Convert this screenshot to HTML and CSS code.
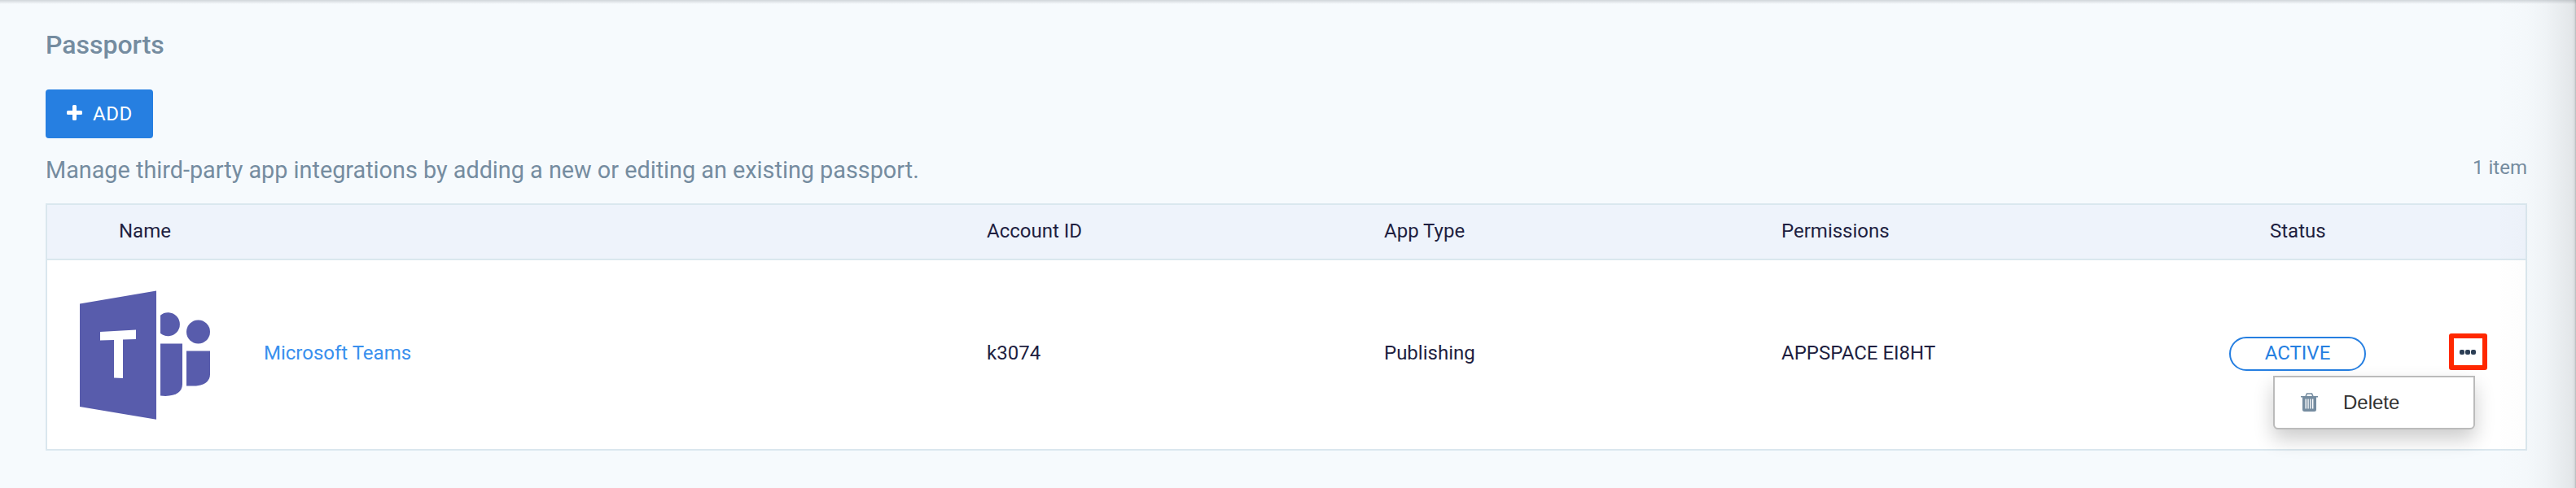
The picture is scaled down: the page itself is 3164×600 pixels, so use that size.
FILE: index.html
```html
<!DOCTYPE html>
<html lang="en">
<head>
    <meta charset="UTF-8">
    <meta name="viewport" content="width=device-width, initial-scale=1.0">
    <title>Passports</title>
    <link rel="stylesheet" href="styles.css">
</head>
<body>
    <div class="container">
        <h1>Passports</h1>
        <button type="button" class="add-button">
            <svg class="plus-icon" viewBox="0 0 19 19">
                <path d="M7 1.5Q7 0 8.5 0h2Q12 0 12 1.5V7h5.5Q19 7 19 8.5v2Q19 12 17.500 12H12v5.500Q12 19 10.500 19h-2Q7 19 7 17.500V12H1.500Q0 12 0 10.500v-2Q0 7 1.500 7H7z"/>
            </svg>
            <span>ADD</span>
        </button>
        <div class="summary">
            <p class="description">Manage third-party app integrations by adding a new or editing an existing passport.</p>
            <span class="count">1 item</span>
        </div>

        <div class="table">
            <div class="row header">
                <div class="name">Name</div>
                <div>Account ID</div>
                <div>App Type</div>
                <div>Permissions</div>
                <div class="status">Status</div>
            </div>
            <div class="row item">
                <div class="app">
                    <svg class="logo" viewBox="0 0 160 160">
                        <path fill-rule="evenodd" d="M0 17.500L94 1.500v158.300L0 144zM25 52v10.500l17-.5v46.500l11 .5V61.500l16-.5V49.500z"/>
                        <path d="M99 31.700A14.500 14.500 0 1 1 99 53.800z"/>
                        <path d="M99 66.500h27v50c0 10-10 16-27 14z"/>
                        <circle cx="145.500" cy="52" r="14.500"/>
                        <path d="M131 75.500h29v29c0 9-9 14-20 14h-9z"/>
                    </svg>
                    <a class="link">Microsoft Teams</a>
                </div>
                <div>k3074</div>
                <div>Publishing</div>
                <div>APPSPACE EI8HT</div>
                <div><span class="pill">ACTIVE</span></div>
                <div class="actions">
                    <button type="button" class="more">
                        <svg class="dots" viewBox="0 0 20 6">
                            <rect width="6" height="6" rx="2"/>
                            <rect x="7" width="6" height="6" rx="2"/>
                            <rect x="14" width="6" height="6" rx="2"/>
                        </svg>
                    </button>
                    <div class="menu">
                        <svg class="trash-icon" viewBox="0 0 21 23">
                            <path class="handle" d="M6 4.500L7.500 1h6L15 4.500"/>
                            <path fill-rule="evenodd" d="M0 4h21v1.500h-2V20.500Q19 23 16.500 23h-12Q2 23 2 20.500V5.500H0zM5.500 7.500V19.500h1.400V7.500zM8.400 7.500V19.500h1.300V7.500zM11.200 7.500V19.500h1.300V7.500zM14 7.500V19.500h1.400V7.500z"/>
                        </svg>
                        <span>Delete</span>
                    </div>
                </div>
            </div>
        </div>
    </div>
    <div class="top-shadow"></div>
    <div class="side-shadow"></div>
</body>
</html>
```
FILE: styles.css
```css
* {
    box-sizing: border-box;
}

body {
    position: relative;
    height: 600px;
    margin: 0;
    overflow: hidden;
    background-color: #f6fafd;
    color: #1f1f41;
    font-family: Roboto, sans-serif;
    font-size: 24px;
    line-height: 28px;
}

.container {
    padding: 36px 60px 0 56px;
}

h1 {
    margin: 0 0 36px;
    color: #758ca0;
    font-size: 32px;
    font-weight: 500;
    line-height: 38px;
}

.add-button {
    display: flex;
    align-items: center;
    width: 132px;
    height: 60px;
    padding: 0 0 0 26px;
    border: none;
    border-radius: 4px;
    background-color: #267fe1;
    color: white;
    font: inherit;
    letter-spacing: 0.6px;
}

.plus-icon {
    width: 19px;
    height: 19px;
    margin: 0 13px 3px 0;
    fill: white;
}

.summary {
    display: flex;
    justify-content: space-between;
    height: 80px;
    color: #758ca0;
}

.description {
    margin: 22px 0 0;
    font-size: 28.8px;
    line-height: 34px;
}

.count {
    margin-top: 22px;
}

.table {
    border: 2px solid #dae7ee;
    background-color: white;
}

.row {
    display: grid;
    grid-template-columns: 1154px 488px 488px 550px 270px 1fr;
    align-items: center;
}

.header {
    height: 68px;
    padding-bottom: 2px;
    border-bottom: 2px solid #dae7ee;
    background-color: #eef3fb;
}

.name {
    padding-left: 88px;
}

.status {
    padding-left: 50px;
}

.item {
    height: 232px;
    padding-bottom: 4px;
}

.app {
    display: flex;
    align-items: center;
    padding-left: 40px;
}

.logo {
    width: 160px;
    height: 160px;
    margin: 4px 66px 0 0;
    fill: #585cac;
}

.link {
    color: #3990ee;
}

.pill {
    display: flex;
    align-items: center;
    justify-content: center;
    width: 168px;
    height: 42px;
    margin-top: 2px;
    padding-bottom: 3px;
    border: 2px solid #267fe1;
    border-radius: 21px;
    color: #267fe1;
}

.actions {
    position: relative;
    height: 48px;
}

.more {
    display: flex;
    align-items: center;
    justify-content: center;
    width: 47px;
    height: 45px;
    padding: 0;
    border: 6px solid #ff2800;
    border-radius: 3px;
    background: white;
}

.dots {
    width: 20px;
    height: 6px;
    margin-right: 1px;
    fill: #2c3e55;
}

.menu {
    position: absolute;
    top: 52px;
    right: 62px;
    display: flex;
    align-items: center;
    width: 248px;
    height: 66px;
    padding-left: 32px;
    border: 2px solid #bbb;
    border-radius: 0 0 6px 6px;
    background-color: white;
    box-shadow: 0 12px 24px rgba(0, 0, 0, 0.2);
    color: #333;
    font-family: "Liberation Sans", Helvetica, sans-serif;
}

.trash-icon {
    width: 21px;
    height: 23px;
    margin: 0 31px 1px 0;
    fill: #758ca0;
}

.handle {
    fill: none;
    stroke: #758ca0;
    stroke-width: 1.6;
}

.top-shadow {
    position: absolute;
    top: 0;
    left: 0;
    right: 0;
    height: 5px;
    background: linear-gradient(rgba(60, 70, 80, 0.2), rgba(60, 70, 80, 0));
}

.side-shadow {
    position: absolute;
    top: 0;
    right: 0;
    bottom: 0;
    width: 100px;
    background: linear-gradient(to right, rgba(60, 60, 60, 0), rgba(60, 60, 60, 0.01) 40%, rgba(60, 60, 60, 0.035) 62%, rgba(60, 60, 60, 0.1) 95%, rgba(60, 60, 60, 0.15) 98%, rgba(60, 60, 60, 0.35));
}
```
